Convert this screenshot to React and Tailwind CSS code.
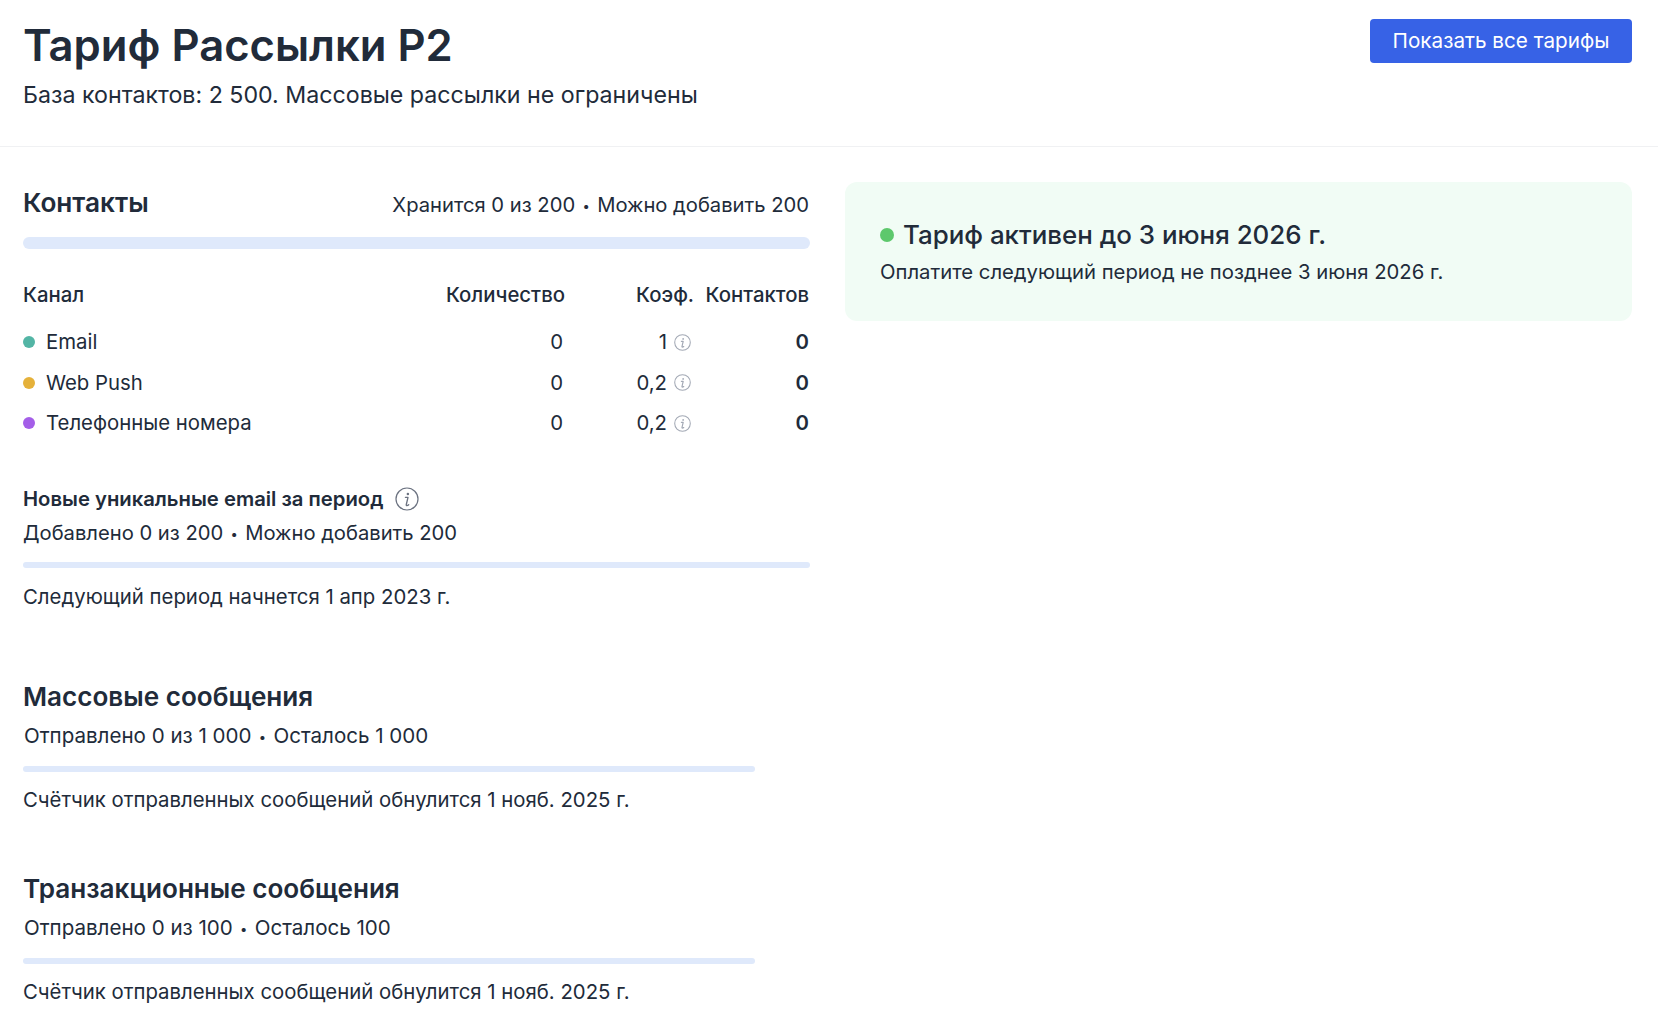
const channels = [
    { name: "Email", dot: "bg-[#53b5a5]", coef: "1" },
    { name: "Web Push", dot: "bg-[#e5b13a]", coef: "0,2" },
    { name: "Телефонные номера", dot: "bg-[#a45ee8]", coef: "0,2" },
]

const tableCols = "grid grid-cols-[1fr_140px_129px_116px] text-[20.35px] leading-[30px]"

function InfoIcon({ className, strokeWidth = 1 }) {
    return (
        <svg viewBox="0 0 24 24" fill="none" stroke="currentColor" className={className}>
            <circle cx="12" cy="12" r="11" strokeWidth={strokeWidth} />
            <circle cx="12.9" cy="6.9" r="1.25" fill="currentColor" stroke="none" />
            <path d="M10.4 10.3h2.6l-1.7 7.2c-.2.8.1 1.1.6 1.1.6 0 1.2-.3 1.8-.9" strokeWidth={strokeWidth * 1.1} strokeLinecap="round" strokeLinejoin="round" />
        </svg>
    )
}

function Progress({ className }) {
    return <div className={`rounded-full bg-[#dfe9fb] ${className}`} />
}

function Dot() {
    return <span className="inline-block w-[22px] text-center text-[13px] align-[1px]">•</span>
}

function MessageBlock({ title, sent, left, className }) {
    return (
        <section className={className}>
            <h2 className="text-[26.1px] leading-[32px] font-semibold">{title}</h2>
            <p className="mt-[8px] pl-[1px] text-[20.55px] leading-[30px]">
                {sent}<Dot />{left}
            </p>
            <Progress className="mt-[14px] h-[6px] w-[732px]" />
            <p className="mt-[13px] text-[20.35px] leading-[30px]">Счётчик отправленных сообщений обнулится 1 нояб. 2025 г.</p>
        </section>
    )
}

export default function App() {
    return (
        <div className="min-h-[1034px] bg-white text-[#212b3a] font-['Inter',sans-serif]">
            {/* Header */}
            <header className="flex justify-between items-start h-[147px] pl-[23px] pr-[26px] pt-[19px] border-b border-[#f0f1f3]">
                <div>
                    <h1 className="text-[43.6px] leading-[54px] font-semibold">Тариф Рассылки Р2</h1>
                    <p className="mt-[6px] text-[23.2px] leading-[32px]">База контактов: 2 500. Массовые рассылки не ограничены</p>
                </div>
                <button className="w-[262px] h-[44px] rounded-[4px] bg-[#3762e6] text-white text-[20.7px]">Показать все тарифы</button>
            </header>

            <main className="flex pl-[23px] pr-[26px] pt-[35px] gap-[35px]">
                <div className="w-[787px] shrink-0">
                    {/* Contacts */}
                    <div className="flex justify-between items-start h-[40px] pt-[5px]">
                        <h2 className="text-[26.2px] leading-[32px] font-semibold">Контакты</h2>
                        <p className="mt-[3px] pr-[1px] text-[20.2px] leading-[30px]">Хранится 0 из 200<Dot />Можно добавить 200</p>
                    </div>
                    <Progress className="mt-[15px] h-[12px]" />

                    {/* Channels table */}
                    <div className={`mt-[31px] ${tableCols}`}>
                        <div className="font-medium">Канал</div>
                        <div className="text-right font-medium whitespace-nowrap">Количество</div>
                        <div className="text-right font-medium">Коэф.</div>
                        <div className="text-right font-medium pr-[1px]">Контактов</div>
                    </div>
                    <div className="mt-[17px] flex flex-col gap-[10.5px]">
                        {channels.map(c => (
                            <div key={c.name} className={`${tableCols} items-center`}>
                                <div className="flex items-center gap-[11px]">
                                    <span className={`w-[12px] h-[12px] rounded-full ${c.dot}`} />
                                    {c.name}
                                </div>
                                <div className="text-right pr-[2px]">0</div>
                                <div className="flex justify-end items-center gap-[7px] pr-[3px]">
                                    {c.coef}
                                    <InfoIcon className="w-[17px] h-[17px] text-[#a3a9b5]" strokeWidth={1.5} />
                                </div>
                                <div className="text-right font-semibold pr-[1px]">0</div>
                            </div>
                        ))}
                    </div>

                    {/* New unique emails */}
                    <div className="mt-[46px] flex items-center gap-[12px]">
                        <h3 className="text-[20.25px] leading-[30px] font-semibold">Новые уникальные email за период</h3>
                        <InfoIcon className="w-[24px] h-[24px] text-[#6b7280]" strokeWidth={1.2} />
                    </div>
                    <p className="mt-[4px] text-[20.2px] leading-[30px]">Добавлено 0 из 200<Dot />Можно добавить 200</p>
                    <Progress className="mt-[13px] h-[6px]" />
                    <p className="mt-[14px] text-[20.35px] leading-[30px]">Следующий период начнется 1 апр 2023 г.</p>

                    <MessageBlock className="mt-[69px]" title="Массовые сообщения" sent="Отправлено 0 из 1 000" left="Осталось 1 000" />
                    <MessageBlock className="mt-[58px]" title="Транзакционные сообщения" sent="Отправлено 0 из 100" left="Осталось 100" />
                </div>

                {/* Status card */}
                <aside className="flex-1 h-[139px] rounded-[12px] bg-[#f1fcf5] pl-[35px] pt-[35px]">
                    <div className="flex items-center gap-[9px]">
                        <span className="w-[14px] h-[14px] rounded-full bg-[#5dc86c]" />
                        <span className="text-[25.9px] leading-[36px] font-medium">Тариф активен до 3 июня 2026 г.</span>
                    </div>
                    <p className="mt-[4px] text-[20.27px] leading-[30px]">Оплатите следующий период не позднее 3 июня 2026 г.</p>
                </aside>
            </main>
        </div>
    )
}
